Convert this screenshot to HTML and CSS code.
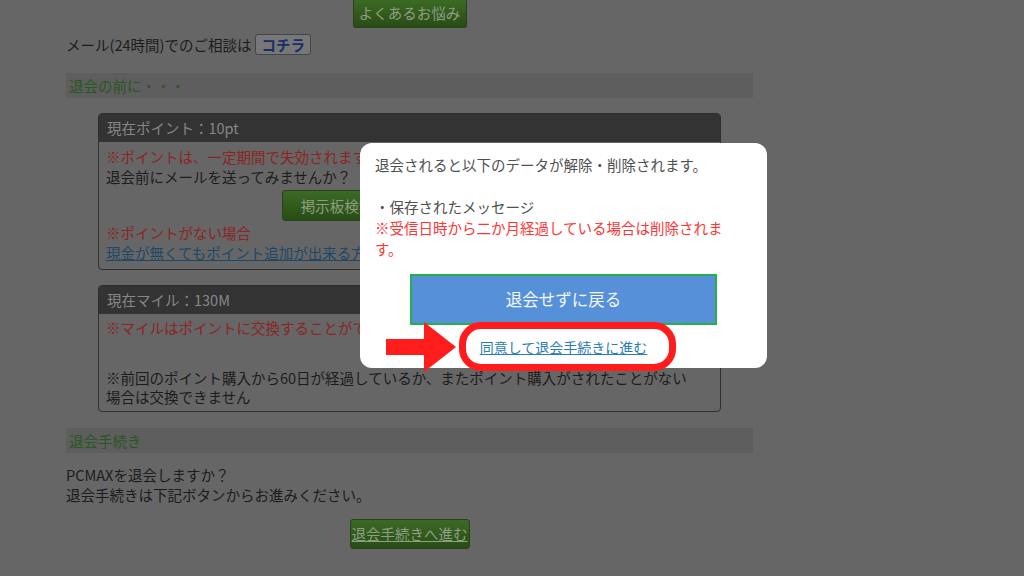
FILE: index.html
```html
<!DOCTYPE html>
<html lang="ja">
<head>
<meta charset="utf-8">
<title>退会手続き</title>
<link rel="stylesheet" href="styles.css">
</head>
<body>
<div class="page">
  <div class="btn-row top-row"><a class="btn-green btn-faq">よくあるお悩み</a></div>
  <p class="mail-line">メール(24時間)でのご相談は<span class="btn-kochira">コチラ</span></p>

  <h2 class="section-bar">退会の前に・・・</h2>

  <div class="card">
    <div class="card-head">現在ポイント：10pt</div>
    <div class="card-body">
      <p class="red">※ポイントは、一定期間で失効されます。</p>
      <p>退会前にメールを送ってみませんか？</p>
      <div class="btn-row gap-s"><a class="btn-green btn-search">掲示板検索でメールの相手を探す</a></div>
      <p class="red gap-xs">※ポイントがない場合</p>
      <a class="link">現金が無くてもポイント追加が出来る方法はこちら</a>
    </div>
  </div>

  <div class="card">
    <div class="card-head">現在マイル：130M</div>
    <div class="card-body">
      <p class="red">※マイルはポイントに交換することができます。</p>
      <p class="note">※前回のポイント購入から60日が経過しているか、またポイント購入がされたことがない<br>場合は交換できません</p>
    </div>
  </div>

  <h2 class="section-bar bar-2">退会手続き</h2>
  <p class="intro">PCMAXを退会しますか？<br>退会手続きは下記ボタンからお進みください。</p>
  <div class="btn-row gap-m"><a class="btn-green btn-proceed">退会手続きへ進む</a></div>
</div>

<div class="modal">
  <p class="modal-text">退会されると以下のデータが解除・削除されます。<br><br>・保存されたメッセージ<br><span class="modal-red">※受信日時から二か月経過している場合は削除されます。</span></p>
  <button class="btn-back">退会せずに戻る</button>
  <p class="modal-link-row"><a class="modal-link">同意して退会手続きに進む</a></p>
</div>

<svg class="arrow" width="76" height="56" viewBox="0 0 76 56" aria-hidden="true">
  <rect x="2" y="19" width="41" height="16" fill="#ff1c1c"/>
  <polygon points="40,2 40,52 72,27" fill="#ff1c1c"/>
</svg>
<div class="highlight"></div>
</body>
</html>
```
FILE: styles.css
```css
* { box-sizing: border-box; }

html, body {
  margin: 0;
  padding: 0;
}

body {
  background: #666666;
  color: #1c1c1c;
  font-family: "Noto Sans CJK JP", "Noto Sans", sans-serif;
  font-size: 14.5px;
  line-height: 20px;
  width: 1024px;
  height: 576px;
  overflow: hidden;
  position: relative;
}

p { margin: 0; }

.page {
  margin-left: 66px;
  width: 687px;
}

.btn-row {
  display: flex;
  justify-content: center;
}

.btn-green {
  display: block;
  background: linear-gradient(#3c6a24, #294c15);
  border: 1px solid #28421a;
  border-radius: 3px;
  color: #8c9e84;
  text-align: center;
  white-space: nowrap;
}

.btn-faq {
  width: 114px;
  height: 28px;
  line-height: 26px;
  border-radius: 0 0 3px 3px;
  border-top: none;
}

.mail-line {
  margin-top: 6px;
  line-height: 21px;
  display: flex;
  align-items: center;
}

.btn-kochira {
  display: inline-block;
  margin-left: 4px;
  height: 21px;
  line-height: 19px;
  padding: 0 5px;
  background: #777777;
  border: 1px solid #454545;
  border-radius: 3px;
  color: #1b2e6a;
  font-weight: bold;
}

.section-bar {
  margin: 18px 0 0;
  height: 25px;
  line-height: 25px;
  padding-left: 3px;
  background: #5e5e5e;
  color: #295822;
  font-size: 14.5px;
  font-weight: normal;
}

.bar-2 { margin-top: 16px; }

.card {
  margin: 15px 32px 0;
  border: 1px solid #2f2f2f;
  border-radius: 4px;
  overflow: hidden;
}

.card-head {
  height: 28px;
  line-height: 28px;
  padding-left: 8px;
  background: #333333;
  color: #878787;
}

.card-body {
  padding: 5px 7px 6px;
}

.card + .card .card-body {
  padding-top: 4px;
  padding-bottom: 5px;
}

.red { color: #8c2424; }

.gap-xs { margin-top: 2px; }
.gap-s { margin-top: 3px; }
.gap-m { margin-top: 14px; }

.btn-search {
  width: 255px;
  height: 31px;
  line-height: 29px;
  overflow: hidden;
}

.link {
  display: inline-block;
  color: #1e4666;
  text-decoration: underline;
}

.note {
  margin-top: 31px;
  line-height: 18.5px;
}

.intro {
  margin-top: 12px;
}

.btn-proceed {
  width: 120px;
  height: 30px;
  line-height: 28px;
  text-decoration: underline;
}

/* modal */
.modal {
  position: absolute;
  left: 360px;
  top: 143px;
  width: 407px;
  height: 225px;
  background: #ffffff;
  border-radius: 12px;
  padding: 11px 15px 10px;
}

.modal-text {
  width: 352px;
  color: #505050;
  line-height: 21px;
}

.modal-red { color: #ff3535; }

.btn-back {
  display: block;
  margin: 14.5px auto 0;
  width: 307px;
  height: 51px;
  background: #5590d9;
  border: 2px solid #25b04a;
  color: #f4f7fb;
  font-family: "Noto Sans CJK JP", "Noto Sans", sans-serif;
  font-size: 16.5px;
  line-height: 47px;
  padding: 0;
}

.modal-link-row {
  margin-top: 11.5px;
  text-align: center;
  line-height: 21px;
}

.modal-link {
  color: #2a7cb5;
  font-size: 14px;
  text-decoration: underline;
}

.arrow {
  position: absolute;
  left: 384px;
  top: 320px;
}

.highlight {
  position: absolute;
  left: 459px;
  top: 322px;
  width: 217px;
  height: 49px;
  border: 7px solid #ff1c1c;
  border-radius: 22px;
}
```
